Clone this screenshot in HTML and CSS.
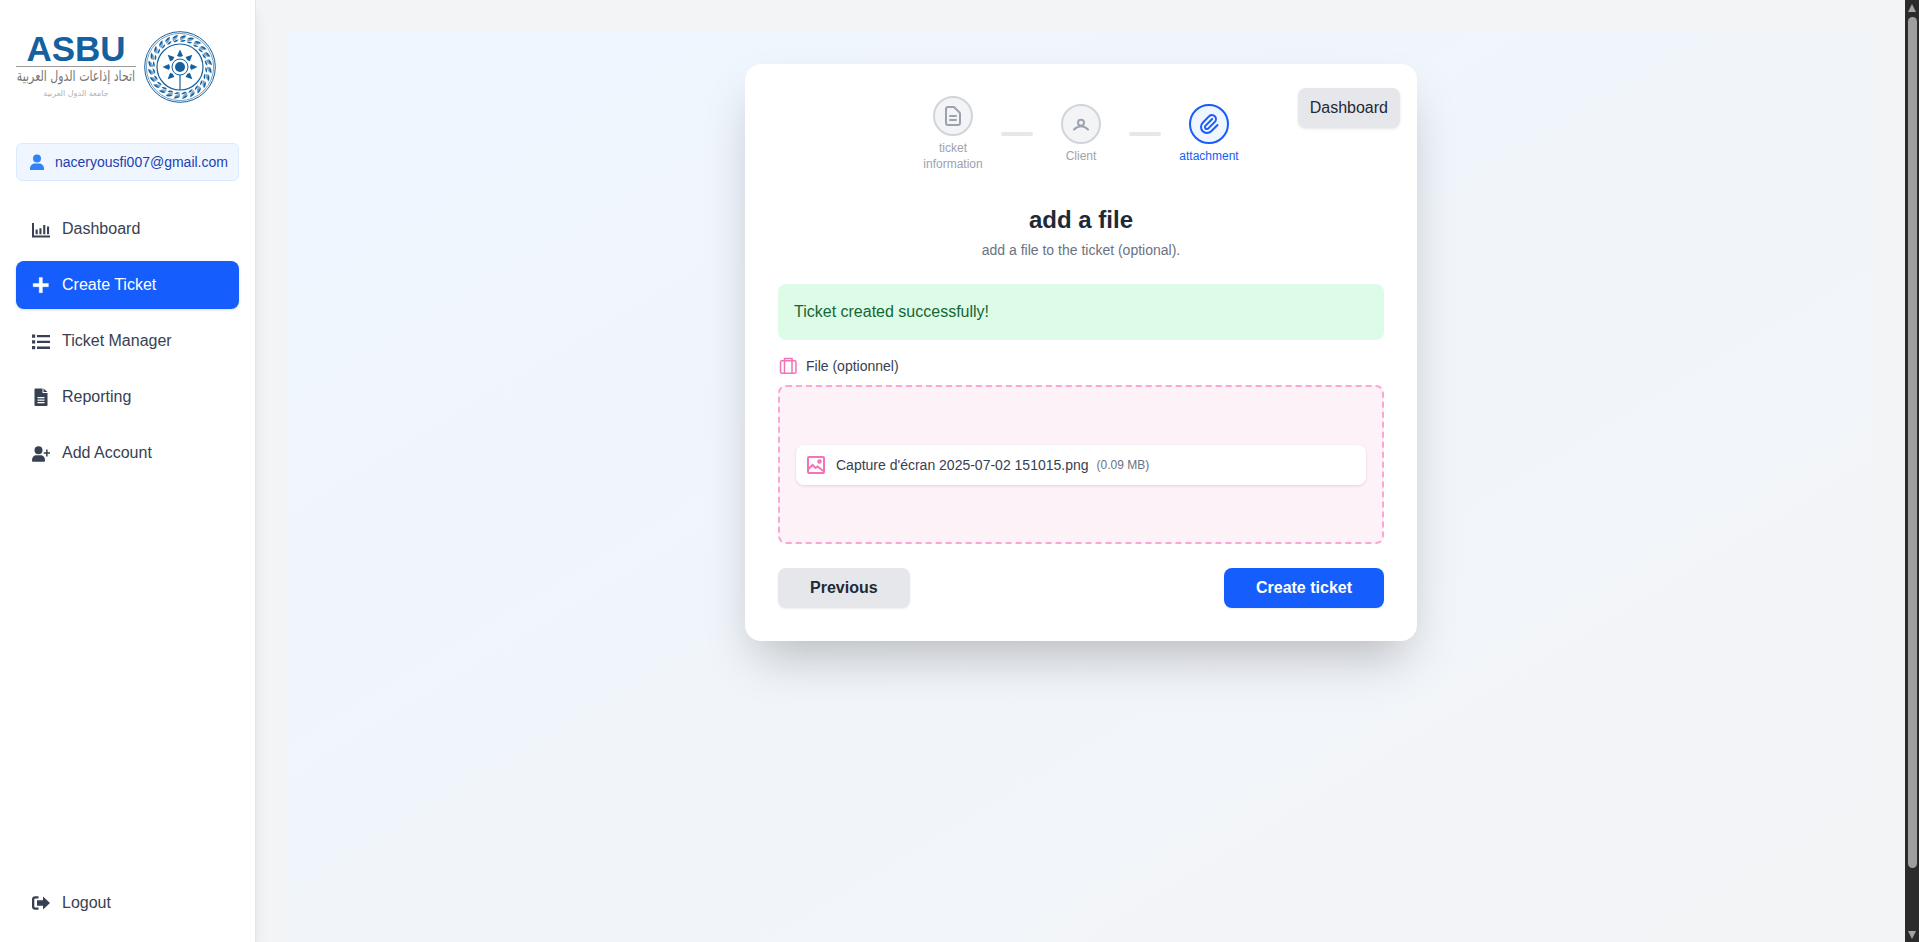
FILE: index.html
```html
<!DOCTYPE html>
<html lang="en">
<head>
<meta charset="utf-8">
<title>Create Ticket</title>
<link rel="stylesheet" href="styles.css">
</head>
<body>
<div class="app">
  <aside class="sidebar">
    <div class="logo">
      <div class="logo-words">
        <div class="logo-name">ASBU</div>
        <div class="logo-arabic"><span lang="ar" dir="rtl">اتحاد إذاعات الدول العربية</span></div>
        <div class="logo-sub" lang="ar" dir="rtl">جامعة الدول العربية</div>
      </div>
      <svg class="emblem" viewBox="-36 -36 72 72" aria-hidden="true">
        <defs>
          <g id="leaf">
            <path d="M0-29.800c1.800-1.500 4.200-2 6.500-1.500-1.600 1.900-4.200 2.600-6.500 1.500z"/>
            <path d="M0-29.800c1.800 0 4.200.3 6-.7-1.300 2.800-3.800 3.500-6 4z" opacity=".55"/>
            <path d="M0-25.800c1.800-1.200 3.800-1.500 5.800-1-1.500 1.600-3.800 2.100-5.800 1z"/>
          </g>
          <path id="ray" d="M-3-11 0-17.500 3-11 0-10z"/>
        </defs>
        <circle class="em-line" r="35.300" stroke-width="1"/>
        <circle class="em-line" r="33.600" stroke-width=".6"/>
        <circle class="em-line" r="23" stroke-width="1.200"/>
        <g class="em-fill">
          <use href="#leaf"/>
          <use href="#leaf" transform="rotate(15)"/>
          <use href="#leaf" transform="rotate(30)"/>
          <use href="#leaf" transform="rotate(45)"/>
          <use href="#leaf" transform="rotate(60)"/>
          <use href="#leaf" transform="rotate(75)"/>
          <use href="#leaf" transform="rotate(90)"/>
          <use href="#leaf" transform="rotate(105)"/>
          <use href="#leaf" transform="rotate(120)"/>
          <use href="#leaf" transform="rotate(135)"/>
          <use href="#leaf" transform="rotate(150)"/>
          <use href="#leaf" transform="rotate(165)"/>
          <use href="#leaf" transform="rotate(180)"/>
          <use href="#leaf" transform="rotate(195)"/>
          <use href="#leaf" transform="rotate(210)"/>
          <use href="#leaf" transform="rotate(225)"/>
          <use href="#leaf" transform="rotate(240)"/>
          <use href="#leaf" transform="rotate(255)"/>
          <use href="#leaf" transform="rotate(270)"/>
          <use href="#leaf" transform="rotate(285)"/>
          <use href="#leaf" transform="rotate(300)"/>
          <use href="#leaf" transform="rotate(315)"/>
          <use href="#leaf" transform="rotate(330)"/>
          <use href="#leaf" transform="rotate(345)"/>
          <use href="#ray"/>
          <use href="#ray" transform="rotate(45)"/>
          <use href="#ray" transform="rotate(90)"/>
          <use href="#ray" transform="rotate(135)"/>
          <use href="#ray" transform="rotate(225)"/>
          <use href="#ray" transform="rotate(270)"/>
          <use href="#ray" transform="rotate(315)"/>
          <circle r="5"/>
          <rect x="-.6" y="8" width="1.200" height="15"/>
        </g>
        <circle class="em-line" r="8" stroke-width="1"/>
      </svg>
    </div>

    <div class="user-box">
      <svg class="user-icon" viewBox="0 0 16 16" aria-hidden="true"><circle cx="8" cy="4.500" r="4"/><path d="M1 16v-1.500C1 11.500 3.500 9.500 6 9.500h4c2.500 0 5 2 5 5V16z"/></svg>
      <span>naceryousfi007@gmail.com</span>
    </div>

    <nav class="nav">
      <a class="nav-item">
        <svg class="nav-icon" viewBox="0 0 18 18" aria-hidden="true"><path d="M0 3h2v12.400h16V17.400H0z"/><path d="M3.600 9.500h2.100v4.800H3.600zM7.400 8.200h2.100v6.100H7.400zM11.200 5h2.100v9.300h-2.100zM15 6.500h2.100v7.800H15z"/></svg>
        <span>Dashboard</span>
      </a>
      <a class="nav-item is-active">
        <svg class="nav-icon" viewBox="0 0 18 18" aria-hidden="true"><path d="M7.200 1.500h3.200v6h6v3.200h-6v6H7.200v-6h-6V7.500h6z" stroke="#fff" stroke-width=".4" stroke-linejoin="round"/></svg>
        <span>Create Ticket</span>
      </a>
      <a class="nav-item">
        <svg class="nav-icon" viewBox="0 0 18 18" aria-hidden="true"><path d="M0 2.500h3.200v3.200H0zM5 3h13v2.300H5zM0 8.300h3.200v3.200H0zM5 8.800h13v2.300H5zM0 14.100h3.200v3.200H0zM5 14.600h13v2.300H5z"/></svg>
        <span>Ticket Manager</span>
      </a>
      <a class="nav-item">
        <svg class="nav-icon" viewBox="0 0 18 18" aria-hidden="true"><path fill-rule="evenodd" d="M3.500 0.500h7v4.500h5V17a1 1 0 0 1-1 1h-11a1 1 0 0 1-1-1V1.500a1 1 0 0 1 1-1zM5.500 9v1.300h7V9zM5.500 11.500v1.300h7v-1.300zM5.500 14v1.300h7V14z"/><path d="M11.500.5l4 3.500h-4z"/></svg>
        <span>Reporting</span>
      </a>
      <a class="nav-item">
        <svg class="nav-icon" viewBox="0 0 18 18" aria-hidden="true"><circle cx="6.500" cy="6.300" r="4"/><path d="M0 16.500c0-3.200 1.800-5.300 4.200-5.300h4.600c2.400 0 4.200 2.100 4.200 5.300 0 .8-.5 1.300-1.200 1.300H1.200C.5 17.800 0 17.300 0 16.500z"/><path d="M14.100 5.500h1.500v2.700H18v1.500h-2.400v2.700h-1.500V9.700h-2.400V8.200h2.400z"/></svg>
        <span>Add Account</span>
      </a>
    </nav>

    <a class="nav-item logout">
      <svg class="nav-icon" viewBox="0 0 18 18" aria-hidden="true"><path d="M6.500 2.200H3.200A3.200 3.200 0 0 0 0 5.400v7.200a3.200 3.200 0 0 0 3.200 3.200h3.300v-2.300H3.200a.9.9 0 0 1-.9-.9V5.400c0-.5.400-.9.900-.9h3.300z"/><path d="M11 2.500 18 9l-7 6.500v-3.700H5V6.200h6z"/></svg>
      <span>Logout</span>
    </a>
  </aside>

  <main class="main">
    <div class="panel">
      <section class="card">
        <a class="dash-btn">Dashboard</a>

        <div class="stepper">
          <div class="step">
            <div class="step-dot">
              <svg viewBox="0 0 24 24" aria-hidden="true"><path d="M9 12h6m-6 4h6m2 5H7a2 2 0 0 1-2-2V5a2 2 0 0 1 2-2h5.586a1 1 0 0 1 .707.293l5.414 5.414a1 1 0 0 1 .293.707V19a2 2 0 0 1-2 2z"/></svg>
            </div>
            <div class="step-label">ticket information</div>
          </div>
          <div class="step-line"></div>
          <div class="step">
            <div class="step-dot">
              <svg viewBox="0 0 24 24" aria-hidden="true"><circle cx="12" cy="10.700" r="3"/><path d="M5 17.500c2-2 4.500-3.300 7-3.300s5 1.300 7 3.300"/></svg>
            </div>
            <div class="step-label">Client</div>
          </div>
          <div class="step-line"></div>
          <div class="step is-current">
            <div class="step-dot">
              <svg viewBox="0 0 24 24" aria-hidden="true"><path d="M15.172 7l-6.586 6.586a2 2 0 1 0 2.828 2.828l6.414-6.586a4 4 0 0 0-5.656-5.656l-6.415 6.585a6 6 0 1 0 8.486 8.486L20.500 13"/></svg>
            </div>
            <div class="step-label">attachment</div>
          </div>
        </div>

        <h1 class="title">add a file</h1>
        <p class="subtitle">add a file to the ticket (optional).</p>

        <div class="alert">Ticket created successfully!</div>

        <div class="field-label">
          <svg viewBox="0 0 20 20" aria-hidden="true"><rect x="2.500" y="4.700" width="15.500" height="12.600" rx="1.500"/><path d="M6.500 17.300V2.500h7.500v14.800"/></svg>
          <span>File (optionnel)</span>
        </div>

        <div class="dropzone">
          <div class="file-row">
            <svg viewBox="0 0 24 24" aria-hidden="true"><rect x="4" y="4" width="16" height="16" rx="1"/><path d="M4 16.500l4.500-4.500 3 3 2-1.500 6.500 5"/><circle cx="15.500" cy="8.500" r="1.300"/></svg>
            <span class="file-name">Capture d'écran 2025-07-02 151015.png</span>
            <span class="file-size">(0.09 MB)</span>
          </div>
        </div>

        <div class="actions">
          <button class="btn btn-muted" type="button">Previous</button>
          <button class="btn btn-primary" type="button">Create ticket</button>
        </div>
      </section>
    </div>
  </main>

  <div class="scrollbar" aria-hidden="true">
    <div class="arrow-up"></div>
    <div class="thumb"></div>
    <div class="arrow-down"></div>
  </div>
</div>
</body>
</html>
```

FILE: styles.css
```css
* { box-sizing: border-box; }

html, body { margin: 0; height: 100%; }

body {
  font-family: "Liberation Sans", Arial, sans-serif;
  color: #1f2937;
  background: #f3f4f6;
  overflow: hidden;
}

.app { display: flex; height: 100vh; overflow: hidden; }

/* Sidebar */
.sidebar {
  position: relative;
  z-index: 1;
  flex: 0 0 256px;
  min-width: 0;
  display: flex;
  flex-direction: column;
  padding: 16px 16px 15px;
  background: #fff;
  border-right: 1px solid #e5e7eb;
  box-shadow: 0 10px 15px -3px rgba(0,0,0,.1), 0 4px 6px -4px rgba(0,0,0,.1);
}

.logo { display: flex; align-items: flex-start; gap: 8px; height: 76px; margin: 14px 0 37px; }
.logo-words { width: 120px; margin-top: 3px; display: flex; flex-direction: column; align-items: center; }
.logo-name { font-size: 35px; font-weight: 700; line-height: 32px; color: #15609f; height: 33px; }
.logo-arabic {
  width: 120px;
  height: 18px;
  border-top: 1px solid #9a9a9a;
  padding-top: 2px;
  font-family: "DejaVu Sans", sans-serif;
  font-size: 15px;
  line-height: 15px;
  color: #777;
  white-space: nowrap;
}
.logo-arabic span { display: block; width: 164px; margin-left: -22px; text-align: center; transform: scaleX(.73); }
.logo-sub {
  font-family: "DejaVu Sans", sans-serif;
  font-size: 8px;
  line-height: 14px;
  margin-top: 3px;
  color: #b0b0b0;
  white-space: nowrap;
}
.emblem { width: 72px; height: 72px; flex: none; margin-top: 1px; }
.em-line { fill: none; stroke: #15609f; }
.em-fill { fill: #15609f; }

.user-box {
  display: flex;
  align-items: center;
  gap: 10px;
  height: 38px;
  padding: 0 0 0 12px;
  background: #eff6ff;
  border: 1px solid #dbeafe;
  border-radius: 6px;
  font-size: 14px;
  color: #1e40af;
  white-space: nowrap;
}
.user-icon { width: 16px; height: 16px; flex: none; fill: #3182f6; }

.nav { display: flex; flex-direction: column; gap: 8px; margin-top: 24px; }

.nav-item {
  display: flex;
  align-items: center;
  gap: 12px;
  height: 48px;
  padding: 0 16px;
  border-radius: 8px;
  font-size: 16px;
  color: #374151;
}
.nav-icon { width: 18px; height: 18px; flex: none; fill: #374151; }
.nav-item.is-active { background: #155dfc; color: #fff; box-shadow: 0 1px 3px rgba(0,0,0,.15); }
.is-active .nav-icon { fill: #fff; }
.logout { margin-top: auto; }

/* Main */
.main { flex: 1; min-width: 0; padding: 32px 31px 32px 32px; }

.panel {
  min-height: 960px;
  padding: 32px;
  background: linear-gradient(to bottom right, #eff6ff, #f3f4f6);
}

.card {
  position: relative;
  width: 672px;
  margin: 0 auto;
  padding: 32px 33px 33px;
  background: #fff;
  border-radius: 16px;
  box-shadow: 0 25px 50px -12px rgba(0,0,0,.25);
}

.dash-btn {
  position: absolute;
  top: 24px;
  right: 17px;
  padding: 8px 12px;
  font-size: 16px;
  line-height: 24px;
  color: #1f2937;
  background: #e5e7eb;
  border-radius: 8px;
  box-shadow: 0 1px 3px rgba(0,0,0,.1);
}

/* Stepper */
.stepper { display: flex; justify-content: center; align-items: center; }
.step { width: 80px; display: flex; flex-direction: column; align-items: center; }
.step-dot {
  width: 40px;
  height: 40px;
  display: flex;
  align-items: center;
  justify-content: center;
  background: #f3f4f6;
  border: 2px solid #d1d5db;
  border-radius: 50%;
}
.step-dot svg { width: 24px; height: 24px; flex: none; fill: none; stroke: #9ca3af; stroke-width: 2; stroke-linecap: round; stroke-linejoin: round; }
.step-label { margin-top: 4px; font-size: 12px; line-height: 16px; color: #9ca3af; text-align: center; }
.step-line { width: 32px; height: 4px; margin: 0 8px; background: #e5e7eb; border-radius: 2px; }
.is-current .step-dot { background: #eff6ff; border-color: #155dfc; }
.is-current .step-dot svg { stroke: #155dfc; }
.is-current .step-label { color: #155dfc; }

/* Heading */
.title { margin: 32px 0 4px; font-size: 24px; line-height: 32px; font-weight: 700; text-align: center; color: #1f2937; }
.subtitle { margin: 0 0 24px; font-size: 14px; line-height: 20px; text-align: center; color: #6b7280; }

.alert {
  padding: 16px;
  margin-bottom: 16px;
  font-size: 16px;
  line-height: 24px;
  color: #166534;
  background: #dcfce7;
  border-radius: 8px;
}

.field-label { display: flex; align-items: center; gap: 8px; margin-bottom: 9px; font-size: 14px; line-height: 20px; color: #374151; }
.field-label svg { width: 20px; height: 20px; flex: none; fill: none; stroke: #f472b6; stroke-width: 1.500; }

.dropzone {
  display: flex;
  align-items: center;
  height: 159px;
  padding: 0 16px;
  background: #fdf2f8;
  border: 2px dashed #f9a8d4;
  border-radius: 8px;
}

.file-row {
  flex: 1;
  display: flex;
  align-items: center;
  gap: 8px;
  padding: 8px;
  background: #fff;
  border-radius: 8px;
  box-shadow: 0 1px 3px rgba(0,0,0,.12);
  font-size: 14px;
  color: #374151;
}
.file-row svg { width: 24px; height: 24px; flex: none; fill: none; stroke: #f472b6; stroke-width: 2; }
.file-size { font-size: 12px; color: #6b7280; }

.actions { display: flex; justify-content: space-between; margin-top: 24px; }

.btn {
  height: 40px;
  padding: 0 32px;
  border: 0;
  border-radius: 8px;
  font-family: inherit;
  font-size: 16px;
  font-weight: 700;
  box-shadow: 0 1px 2px rgba(0,0,0,.08);
}
.btn-muted { background: #e5e7eb; color: #1f2937; }
.btn-primary { background: #155dfc; color: #fff; }

/* Window scrollbar, drawn because the screenshot shows one */
.scrollbar {
  flex: 0 0 14px;
  display: flex;
  flex-direction: column;
  align-items: center;
  padding: 4px 0 3px;
  background: #2b2b2b;
}
.thumb { width: 9px; height: 851px; margin-top: 5px; background: #9f9f9f; border-radius: 5px; }
.arrow-up { width: 0; height: 0; border: solid transparent; border-width: 0 4.500px 8px; border-bottom-color: #a3a3a3; }
.arrow-down { width: 0; height: 0; margin-top: auto; border: solid transparent; border-width: 8px 4.500px 0; border-top-color: #a3a3a3; }
```
